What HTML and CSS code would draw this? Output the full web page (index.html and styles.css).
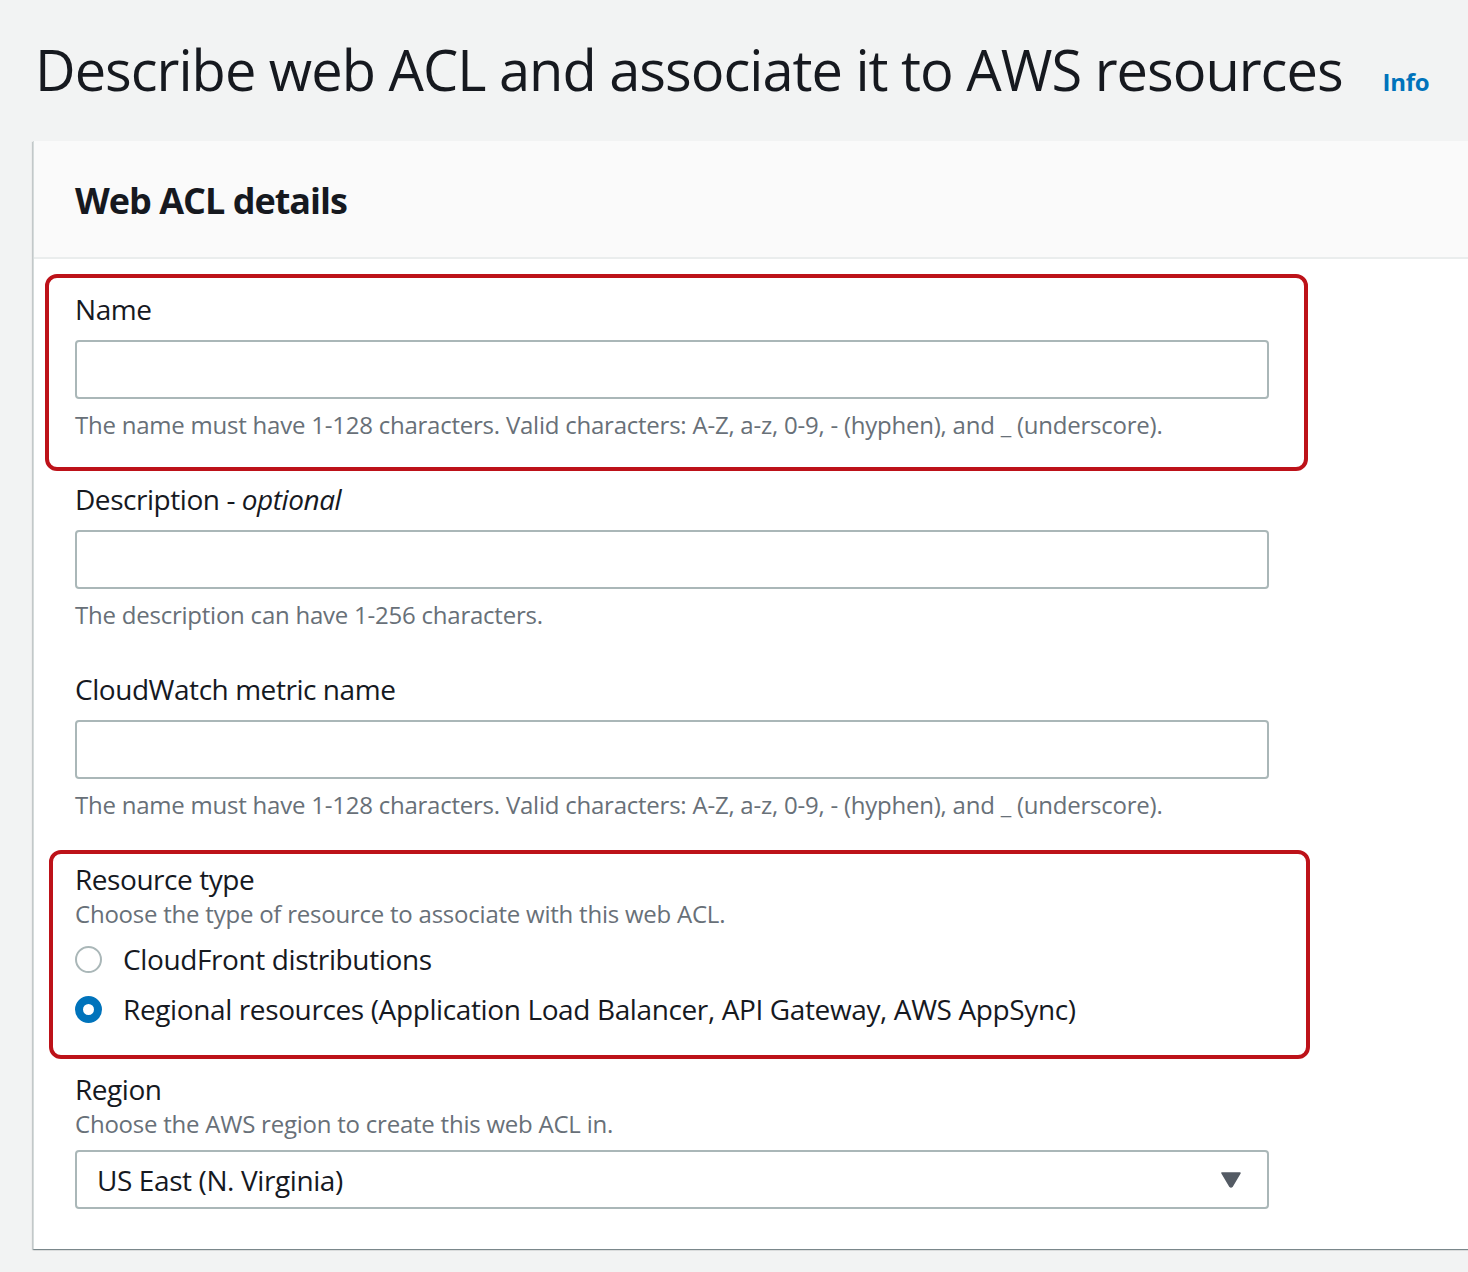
FILE: index.html
```html
<!DOCTYPE html>
<html lang="en">
<head>
<meta charset="utf-8">
<title>Describe web ACL</title>
<link rel="stylesheet" href="styles.css">
</head>
<body>
<div class="page">
  <div class="page-header">
    <h1 class="page-title">Describe web ACL and associate it to AWS resources</h1>
    <a class="info-link" href="#">Info</a>
  </div>
  <div class="card">
    <div class="card-header">
      <h2 class="card-title">Web ACL details</h2>
    </div>
    <div class="card-body">
      <div class="field">
        <div class="highlight highlight-name"></div>
        <label class="field-label">Name</label>
        <div class="input"></div>
        <div class="help">The name must have 1-128 characters. Valid characters: A-Z, a-z, 0-9, - (hyphen), and _ (underscore).</div>
      </div>
      <div class="field">
        <label class="field-label">Description - <i>optional</i></label>
        <div class="input"></div>
        <div class="help">The description can have 1-256 characters.</div>
      </div>
      <div class="field">
        <label class="field-label">CloudWatch metric name</label>
        <div class="input"></div>
        <div class="help">The name must have 1-128 characters. Valid characters: A-Z, a-z, 0-9, - (hyphen), and _ (underscore).</div>
      </div>
      <div class="field field-type">
        <div class="highlight highlight-type"></div>
        <label class="field-label">Resource type</label>
        <div class="desc">Choose the type of resource to associate with this web ACL.</div>
        <div class="radios">
          <div class="radio-row">
            <span class="radio"></span>
            <span class="radio-label">CloudFront distributions</span>
          </div>
          <div class="radio-row">
            <span class="radio radio-checked"></span>
            <span class="radio-label">Regional resources (Application Load Balancer, API Gateway, AWS AppSync)</span>
          </div>
        </div>
      </div>
      <div class="field">
        <label class="field-label">Region</label>
        <div class="desc">Choose the AWS region to create this web ACL in.</div>
        <div class="select">
          <span class="select-value">US East (N. Virginia)</span>
          <svg class="caret" width="20" height="16" viewBox="0 0 20 16"><path d="M1 1 H19 L11 14.5 Q10 15.5 9 14.5 Z" fill="#545b64" stroke="#545b64" stroke-width="1.5" stroke-linejoin="round"/></svg>
        </div>
      </div>
    </div>
  </div>
</div>
</body>
</html>
```

FILE: styles.css
```css
html, body {
  margin: 0;
  padding: 0;
  background: #f2f3f3;
  overflow: hidden;
}
body {
  font-family: "Open Sans", "Noto Sans", "Liberation Sans", sans-serif;
  color: #16191f;
  width: 1468px;
  height: 1272px;
}
.page {
  padding: 33px 0 0 33px;
}
.page-header {
  display: flex;
  align-items: baseline;
  height: 108px;
}
.page-title {
  margin: 0;
  font-size: 56px;
  font-weight: 400;
  line-height: 72px;
  letter-spacing: -1px;
  padding-left: 2px;
}
.info-link {
  margin-left: 40px;
  font-size: 24px;
  font-weight: 700;
  color: #0073bb;
  text-decoration: none;
  letter-spacing: -0.3px;
}
.card {
  width: 1500px;
  background: #fff;
  border-left: 1px solid #d5dbdb;
  box-shadow: 0 1px 1px 0 rgba(0, 28, 36, 0.3), 1px 1px 1px 0 rgba(0, 28, 36, 0.15), -1px 1px 1px 0 rgba(0, 28, 36, 0.15);
}
.card-header {
  background: #fafafa;
  border-bottom: 2px solid #eaeded;
  height: 116px;
  display: flex;
  align-items: center;
  padding-left: 41px;
}
.card-title {
  margin: 0;
  font-size: 36px;
  font-weight: 700;
  line-height: 44px;
  padding-top: 4px;
  letter-spacing: -1px;
}
.card-body {
  padding: 32px 0 40px 41px;
}
.field {
  position: relative;
  width: 1194px;
  margin-bottom: 40px;
}
.field-type {
  margin-bottom: 37px;
}
.field:last-child {
  margin-bottom: 0;
}
.field-label {
  display: block;
  font-size: 28px;
  line-height: 36px;
  letter-spacing: -0.45px;
}
.field-label i {
  font-style: italic;
}
.input {
  margin-top: 13px;
  height: 55px;
  border: 2px solid #aab7b8;
  border-radius: 4px;
  background: #fff;
}
.help {
  margin-top: 10px;
  font-size: 24px;
  line-height: 32px;
  color: #687078;
  letter-spacing: -0.23px;
}
.desc {
  font-size: 24px;
  line-height: 32px;
  color: #687078;
  margin-top: 1px;
  letter-spacing: -0.23px;
}
.radios {
  margin-top: 4px;
}
.radio-row {
  display: flex;
  align-items: center;
  height: 50px;
}
.radio {
  box-sizing: border-box;
  width: 27px;
  height: 27px;
  border-radius: 50%;
  border: 2px solid #aab7b8;
  background: #fff;
  flex: none;
}
.radio-checked {
  border: 8px solid #0073bb;
  background: #fff;
}
.radio-label {
  margin-left: 21px;
  font-size: 28px;
  line-height: 36px;
  letter-spacing: -0.38px;
}
.select {
  margin-top: 10px;
  height: 55px;
  border: 2px solid #aab7b8;
  border-radius: 4px;
  display: flex;
  align-items: center;
  justify-content: space-between;
  padding: 0 26px 0 20px;
}
.select-value {
  font-size: 28px;
  line-height: 36px;
  letter-spacing: -0.4px;
}
.highlight {
  position: absolute;
  border: 4px solid #bd1219;
  border-radius: 12px;
  pointer-events: none;
}
.highlight-name {
  top: -17px;
  left: -30px;
  right: -39px;
  bottom: -30px;
}
.highlight-type {
  top: -11px;
  left: -26px;
  right: -41px;
  bottom: -25px;
}
```
